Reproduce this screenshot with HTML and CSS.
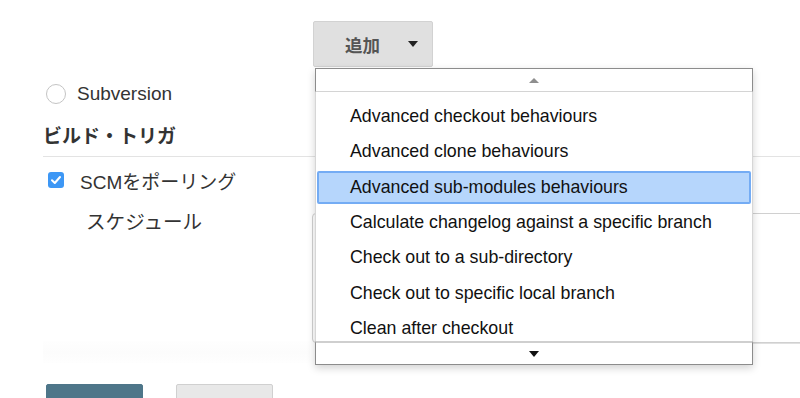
FILE: index.html
```html
<!DOCTYPE html>
<html>
<head>
<meta charset="UTF-8">
<title>ビルド設定</title>
<link rel="stylesheet" href="styles.css">
</head>
<body>
    <div class="page">
        <div class="add-row">
            <div class="add-wrap">
                <button class="add-btn">追加<span class="caret"></span></button>

                <div class="menu">
                    <div class="scroller top"><span class="arrow-up"></span></div>
                    <ul class="menu-list">
                        <li>Advanced checkout behaviours</li>
                        <li>Advanced clone behaviours</li>
                        <li class="active">Advanced sub-modules behaviours</li>
                        <li>Calculate changelog against a specific branch</li>
                        <li>Check out to a sub-directory</li>
                        <li>Check out to specific local branch</li>
                        <li>Clean after checkout</li>
                    </ul>
                    <div class="scroller bottom"><span class="arrow-down"></span></div>
                </div>
            </div>
        </div>

        <div class="option-row radio-row">
            <span class="radio"></span>
            <span class="label">Subversion</span>
        </div>

        <h2 class="section-title">ビルド・トリガ</h2>

        <div class="option-row check-row">
            <span class="checkbox">
                <svg width="16" height="16" viewBox="0 0 16 16"><path d="M4 8.3 L6.8 11 L12 5" fill="none" stroke="#fff" stroke-width="2" stroke-linecap="round" stroke-linejoin="round"/></svg>
            </span>
            <span class="label">SCMをポーリング</span>
        </div>

        <div class="field-row">
            <div class="field-label">スケジュール</div>
            <div class="field-box"></div>
        </div>
        <div class="hint"></div>

        <div class="actions">
            <button class="btn primary">保存</button>
            <button class="btn">適用</button>
        </div>
    </div>
</body>
</html>
```

FILE: styles.css
```css
* {
    margin: 0;
    padding: 0;
    box-sizing: border-box;
}

body {
    font-family: "Liberation Sans", "Noto Sans CJK JP", sans-serif;
    color: #333;
    background: #fff;
    overflow: hidden;
}

.page {
    padding: 21px 0 0 43px;
}

.add-row {
    padding-left: 270px;
}

.add-wrap {
    position: relative;
    width: 120px;
}

.add-btn {
    width: 120px;
    height: 46px;
    background-color: #e0e0e0;
    border: 1px solid #d2d2d2;
    border-radius: 2px;
    font-family: "Noto Sans CJK JP", sans-serif;
    font-size: 17.5px;
    font-weight: bold;
    color: #555;
    display: flex;
    align-items: center;
    padding-left: 31px;
}

.caret {
    margin-left: 28px;
    border-left: 5px solid transparent;
    border-right: 5px solid transparent;
    border-top: 6px solid #222;
}

/* dropdown menu */
.menu {
    position: absolute;
    top: 47px;
    left: 2px;
    width: 438px;
    background: #fff;
    box-shadow: 0 3px 8px rgba(0, 0, 0, 0.18);
    z-index: 10;
}

.scroller {
    height: 24px;
    border: 1px solid #8c8c8c;
    background: #fff;
    display: flex;
    justify-content: center;
    align-items: center;
}

.scroller.top {
    border-bottom-color: #d4d4d4;
}

.scroller.bottom {
    border-top: 2px solid #cfcfcf;
}

.arrow-up {
    border-left: 5px solid transparent;
    border-right: 5px solid transparent;
    border-bottom: 5px solid #8e8e8e;
}

.arrow-down {
    border-left: 5px solid transparent;
    border-right: 5px solid transparent;
    border-top: 6px solid #111;
    margin-top: 1px;
}

.menu-list {
    list-style: none;
    height: 249px;
    overflow: hidden;
    padding-top: 7px;
    border-left: 1px solid #d6d6d6;
    border-right: 1px solid #d6d6d6;
}

.menu-list li {
    height: 35.33px;
    line-height: 35.33px;
    padding-left: 34px;
    font-size: 17.8px;
    color: #111;
    white-space: nowrap;
}

.menu-list li.active {
    height: 33px;
    margin: 1px 1px 1.33px;
    padding-left: 31px;
    line-height: 29px;
    background-color: #b6d6fc;
    border: 2px solid #74acf4;
    border-radius: 2px;
}

/* form rows */
.option-row {
    display: flex;
    align-items: center;
    height: 20px;
}

.option-row .label {
    font-size: 19px;
}

.radio-row {
    margin-top: 17px;
    padding-left: 3px;
}

.radio {
    width: 20px;
    height: 20px;
    border: 1px solid #c4c4c4;
    border-radius: 50%;
    margin-right: 11px;
    background: #fff;
}

.section-title {
    margin-top: 19px;
    height: 34px;
    line-height: 24px;
    font-size: 19px;
    font-weight: bold;
    font-family: "Noto Sans CJK JP", sans-serif;
    border-bottom: 1px solid #e3e3e3;
}

.check-row {
    margin-top: 13px;
    padding-left: 5px;
}

.checkbox {
    width: 16px;
    height: 16px;
    border-radius: 3px;
    background-color: #3d97f5;
    margin-right: 16px;
    display: flex;
}

.field-row {
    display: flex;
    margin-top: 23px;
}

.field-label {
    width: 269px;
    padding-left: 43px;
    margin-top: -2px;
    line-height: 20px;
    font-size: 19.6px;
    font-family: "Noto Sans CJK JP", sans-serif;
}

.field-box {
    flex: 1;
    height: 130px;
    margin-right: -10px;
    border: 1px solid #d0d0d0;
    border-radius: 4px;
    box-shadow: 0 10px 0 -9px #e0e0e0;
}

.hint {
    width: 267px;
    height: 22px;
    margin-top: -2px;
    background: linear-gradient(#fefefe, #fcfcfc 50%, #fefefe);
}

.actions {
    display: flex;
    gap: 33px;
    margin-top: 21px;
    padding-left: 3px;
}

.btn {
    width: 97px;
    height: 46px;
    border: 1px solid #d0d0d0;
    border-radius: 2px;
    background-color: #e8e8e8;
    color: #444;
    font-size: 17px;
    font-weight: bold;
    font-family: "Noto Sans CJK JP", sans-serif;
}

.btn.primary {
    background-color: #4e7689;
    border-color: #4e7689;
    color: #fff;
}
```
